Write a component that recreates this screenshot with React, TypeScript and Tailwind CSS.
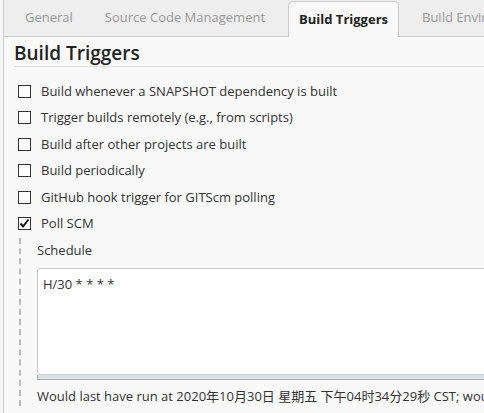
import React, { useState } from "react";

const tabs = ["General", "Source Code Management", "Build Triggers", "Build Environment"];

const triggers = [
  "Build whenever a SNAPSHOT dependency is built",
  "Trigger builds remotely (e.g., from scripts)",
  "Build after other projects are built",
  "Build periodically",
  "GitHub hook trigger for GITScm polling",
  "Poll SCM",
];

const CheckBox = ({ checked }: { checked: boolean }) => (
  <span className="flex h-[13px] w-[13px] shrink-0 items-center justify-center border border-[#333] bg-white">
    {checked && (
      <svg width="11" height="11" viewBox="0 0 11 11">
        <path d="M1.5 5.5 L4 8.5 L9.5 1.5" fill="none" stroke="#111" strokeWidth="2" />
      </svg>
    )}
  </span>
);

const App = () => {
  const [checked, setChecked] = useState<boolean[]>([false, false, false, false, false, true]);
  const [schedule, setSchedule] = useState("H/30 * * * *");

  const toggle = (i: number) => {
    const next = [...checked];
    next[i] = !next[i];
    setChecked(next);
  };

  return (
    <div
      className="h-[413px] w-[484px] overflow-hidden bg-[#f5f5f5] pl-[3px] text-[13px] text-[#333]"
      style={{ fontFamily: '"Open Sans", "Noto Sans CJK SC", sans-serif' }}
    >
      <div className="h-full border-l border-[#ccc] bg-[#f9f9f9]">
        {/* tab bar */}
        <div className="flex h-[37px] items-end border-b border-[#ccc] bg-[#eeeeee] pl-[5px]">
          {tabs.map((t) =>
            t === "Build Triggers" ? (
              <div
                key={t}
                className="-mb-px mx-[7px] flex h-[36px] shrink-0 items-center rounded-t-[5px] border border-b-0 border-[#ccc] bg-[#f9f9f9] px-[10px] text-[13px] font-bold text-[#222]"
              >
                {t}
              </div>
            ) : (
              <div key={t} className="flex h-[36px] shrink-0 items-center px-[16px] text-[#999]">
                {t}
              </div>
            )
          )}
        </div>

        <div className="pl-[10px] pr-0">
          <h2 className="mt-[4px] border-b border-[#ddd] pb-[1px] text-[19px] font-semibold leading-[24px] text-[#222]">
            Build Triggers
          </h2>

          <div className="mt-[11px] pl-[4px]">
            {triggers.map((t, i) => (
              <label
                key={t}
                onClick={() => toggle(i)}
                className="flex h-[26.5px] cursor-pointer items-center gap-[10px]"
              >
                <CheckBox checked={checked[i]} />
                <span className="whitespace-nowrap">{t}</span>
              </label>
            ))}
          </div>

          {checked[5] && (
            <div className="ml-[5px] mt-[1px] border-l-2 border-dashed border-[#bbb] pl-[16px] pt-[2px]">
              <div className="whitespace-nowrap leading-[20px]">Schedule</div>
              <div className="mt-[8px] w-[480px]">
                <textarea
                  value={schedule}
                  onChange={(e) => setSchedule(e.target.value)}
                  className="block h-[107px] w-full resize-none rounded-[3px] border border-[#ccc] bg-white px-[5px] pt-[6px] text-[13px] leading-[18px] text-[#333] outline-none"
                  style={{ fontFamily: '"Open Sans", sans-serif' }}
                />
                <div className="h-[5px] border border-t-0 border-[#aaa] bg-[#dde2e6]" />
              </div>
              <div className="mt-[6px] whitespace-nowrap leading-[20px]">
                Would last have run at 2020年10月30日 星期五 下午04时34分29秒 CST; would next run at 2020年10月30日
              </div>
            </div>
          )}
        </div>
      </div>
    </div>
  );
};

export default App;
